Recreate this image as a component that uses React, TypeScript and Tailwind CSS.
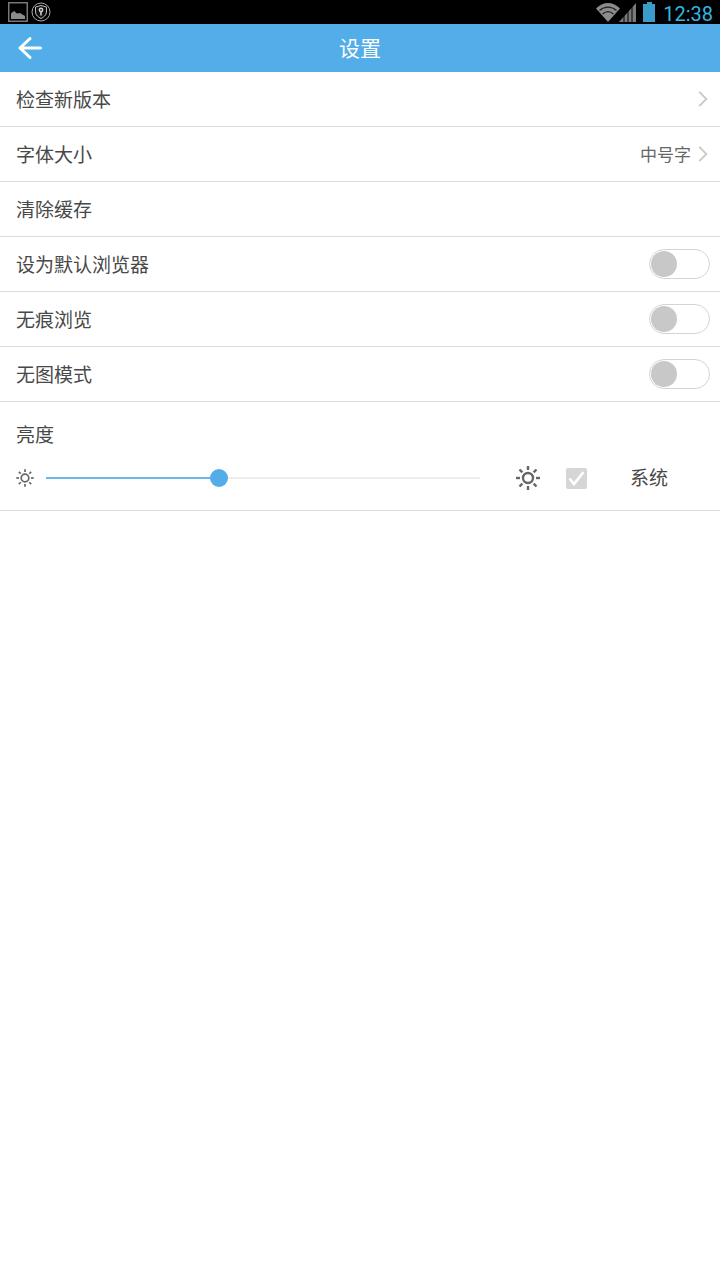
import React from "react";

const font = { fontFamily: '"Noto Sans CJK SC", "Noto Sans", sans-serif' };

function Chevron() {
  return (
    <svg width="10" height="16" viewBox="0 0 10 16" fill="none" stroke="#c8c8c8" strokeWidth="1.8">
      <path d="M1.2 0.8 L8.4 8 L1.2 15.2" />
    </svg>
  );
}

function Toggle() {
  return (
    <div className="w-[61px] h-[30px] rounded-full border border-[#d4d4d4] bg-white flex items-center pl-[1px] mr-[10px]">
      <div className="w-[26px] h-[26px] rounded-full bg-[#c8c8c8]" />
    </div>
  );
}

function Row({ label, right }: { label: string; right?: React.ReactNode }) {
  return (
    <div className="h-[55px] border-b border-[#dcdcdc] flex items-center justify-between pl-[16px] box-border">
      <span className="text-[19px] leading-none text-[#484848] pb-[1px]">{label}</span>
      {right}
    </div>
  );
}

function Sun({ size, r, inner, outer, sw }: { size: number; r: number; inner: number; outer: number; sw: number }) {
  const c = size / 2;
  const rays = [0, 45, 90, 135, 180, 225, 270, 315];
  return (
    <svg width={size} height={size} viewBox={`0 0 ${size} ${size}`} fill="none" stroke="#666666" strokeWidth={sw}>
      <circle cx={c} cy={c} r={r} />
      {rays.map((a) => {
        const t = (a * Math.PI) / 180;
        return (
          <line
            key={a}
            x1={c + inner * Math.cos(t)}
            y1={c + inner * Math.sin(t)}
            x2={c + outer * Math.cos(t)}
            y2={c + outer * Math.sin(t)}
          />
        );
      })}
    </svg>
  );
}

export default function App() {
  return (
    <div className="w-[720px] h-[1280px] bg-white flex flex-col overflow-hidden" style={font}>
      <div className="h-[24px] bg-black flex items-center justify-between pl-[8px] pr-[7px]">
        <div className="flex items-center gap-[3px]">
          <svg width="20" height="20" viewBox="0 0 20 20">
            <rect x="0.75" y="0.75" width="18.5" height="18.5" fill="none" stroke="#777" strokeWidth="1.5" />
            <path d="M3 17 V11.5 L6 9 L9 11.500 L12 11 L14.500 12.500 L17 14 V17 Z" fill="#8c8c8c" />
          </svg>
          <svg width="20" height="20" viewBox="0 0 20 20">
            <circle cx="10" cy="10" r="9" fill="none" stroke="#aaa" strokeWidth="1" />
            <path d="M10 3.500 L15.500 5 V10 C15.500 13 12.500 15.500 10 16.500 C7.500 15.500 4.500 13 4.500 10 V5 Z" fill="#111" stroke="#bbb" strokeWidth="1" />
            <circle cx="10" cy="8" r="2.400" fill="#ccc" />
            <circle cx="10" cy="8" r="0.900" fill="#222" />
            <rect x="9.200" y="9.500" width="1.600" height="4" fill="#ccc" />
          </svg>
        </div>
        <div className="flex items-center">
          <svg width="24" height="20" viewBox="0 0 24 20" className="-mr-[1px]">
            <path d="M0 6.500 C7 -1 17 -1 24 6.500 L12 20 Z" fill="#8c8c8c" />
            <path d="M3.500 8.500 C8.500 4 15.500 4 20.500 8.500" fill="none" stroke="#222" strokeWidth="1.200" />
            <path d="M6.500 12 C10 9 14 9 17.500 12" fill="none" stroke="#222" strokeWidth="1.200" />
          </svg>
          <svg width="17" height="20" viewBox="0 0 17 20" className="mr-[6px]">
            <path d="M0 20 L17 1 V20 Z" fill="#7a7a7a" />
            <path d="M5 12 V20 M9 8 V20 M13 4 V20" stroke="#000" strokeWidth="1" />
          </svg>
          <svg width="13" height="20" viewBox="0 0 13 20" className="mr-[8px]">
            <rect x="5" y="0" width="5" height="3" fill="#3a9cc8" />
            <rect x="1" y="2" width="12" height="18" fill="#3a9cc8" />
          </svg>
          <span className="text-[20px] leading-none text-[#33b5e5] pt-[3px]" style={{ fontFamily: 'Roboto, sans-serif' }}>
            12:38
          </span>
        </div>
      </div>

      <div className="relative h-[48px] bg-[#53ade8] flex items-center justify-center">
        <svg className="absolute left-[18px] top-[12px]" width="24" height="24" viewBox="0 0 24 24" fill="none" stroke="white" strokeWidth="3" strokeLinecap="round" strokeLinejoin="round">
          <path d="M22.500 12 H2.500 M12 2.500 L2 12 L12 21.500" />
        </svg>
        <span className="text-[21px] leading-none text-white pb-[2px]">设置</span>
      </div>

      <Row label="检查新版本" right={<div className="mr-[12px] flex items-center"><Chevron /></div>} />
      <Row
        label="字体大小"
        right={
          <div className="flex items-center gap-[7px] mr-[12px]">
            <span className="text-[17px] leading-none text-[#666666] pb-[1px]">中号字</span>
            <Chevron />
          </div>
        }
      />
      <Row label="清除缓存" />
      <Row label="设为默认浏览器" right={<Toggle />} />
      <Row label="无痕浏览" right={<Toggle />} />
      <Row label="无图模式" right={<Toggle />} />

      <div className="h-[109px] border-b border-[#dcdcdc] box-border pl-[16px] flex flex-col">
        <div className="text-[19px] leading-none text-[#484848] mt-[22px]">亮度</div>
        <div className="flex items-center mt-[23px]">
          <Sun size={18} r={3.800} inner={6} outer={8.700} sw={1.700} />
          <div className="relative w-[434px] h-[2px] ml-[12px] flex items-center">
            <div className="w-full h-[2px] bg-[#eeeeee]" />
            <div className="absolute left-0 top-0 h-[2px] w-[173px] bg-[#6cb6e6]" />
            <div className="absolute left-[164px] top-[-8px] w-[18px] h-[18px] rounded-full bg-[#53ade8]" />
          </div>
          <div className="ml-[36px]">
            <Sun size={24} r={5} inner={8} outer={12} sw={2.400} />
          </div>
          <div className="ml-[26px] w-[21px] h-[21px] rounded-[2px] bg-[#d6d6d6] flex items-center justify-center">
            <svg width="17" height="15" viewBox="0 0 17 15" fill="none" stroke="white" strokeWidth="2.700">
              <path d="M1.500 7.500 L6 13 L15.500 1" />
            </svg>
          </div>
          <span className="ml-[43px] text-[19px] leading-none text-[#484848] pb-[4px]">系统</span>
        </div>
      </div>
    </div>
  );
}
